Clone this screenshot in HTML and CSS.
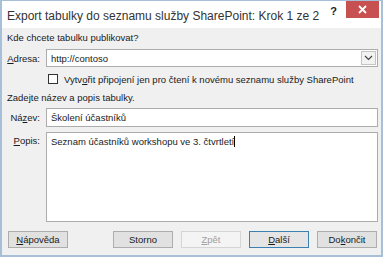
FILE: index.html
```html
<!DOCTYPE html>
<html lang="cs">
  <head>
    <meta charset="UTF-8" />
    <title>Export tabulky do seznamu služby SharePoint</title>
    <link rel="stylesheet" href="styles.css">
  </head>
  <body>
    <div class="dialog">
      <div class="titlebar">
        <h1>Export tabulky do seznamu služby SharePoint: Krok 1 ze 2</h1>
        <div class="help">?</div>
        <div class="close">
          <svg width="9" height="9" viewBox="0 0 9 9"><path d="M1 1L8 8M8 1L1 8" stroke="#fff" stroke-width="1.8"/></svg>
        </div>
      </div>

      <div class="content">
        <p class="section">Kde chcete tabulku publikovat?</p>
        <div class="row">
          <label><u>A</u>dresa:</label>
          <div class="combo">
            <span>http://contoso</span>
            <div class="combo-btn">
              <svg width="9" height="6" viewBox="0 0 9 6"><path d="M1 1L4.5 4.5L8 1" fill="none" stroke="#444" stroke-width="1.2"/></svg>
            </div>
          </div>
        </div>
        <div class="check-row">
          <span class="checkbox"></span>
          <span>Vytv<u>o</u>řit připojení jen pro čtení k novému seznamu služby SharePoint</span>
        </div>

        <p class="section second">Zadejte název a popis tabulky.</p>
        <div class="row">
          <label>Ná<u>z</u>ev:</label>
          <div class="field">Školení účastníků</div>
        </div>
        <div class="row row-top">
          <label><u>P</u>opis:</label>
          <div class="field area">Seznam účastníků workshopu ve 3. čtvrtletí<span class="caret"></span></div>
        </div>

        <div class="buttons">
          <button><u>N</u>ápověda</button>
          <div class="spacer"></div>
          <button>Storno</button>
          <button class="disabled"><u>Z</u>pět</button>
          <button class="default"><u>D</u>alší</button>
          <button>Do<u>k</u>ončit</button>
        </div>
      </div>
    </div>
  </body>
</html>
```

FILE: styles.css
```css
* {
  margin: 0;
  padding: 0;
  box-sizing: border-box;
}

body {
  font-family: 'Liberation Sans', Arial, sans-serif;
  font-size: 9.5px;
  color: #1a1a1a;
  background: #fff;
}

.dialog {
  width: 383px;
  height: 257px;
  border: 2px solid #a7c0da;
  border-top: 1px solid #a7c0da;
  background: #f0f0f0;
  display: flex;
  flex-direction: column;
  overflow: hidden;
}

.titlebar {
  height: 27px;
  background: #fff;
  display: flex;
  align-items: flex-start;
  flex-shrink: 0;
}
.titlebar h1 {
  font-weight: normal;
  font-size: 12px;
  color: #333;
  padding: 8px 0 0 5px;
  flex: 1;
  white-space: nowrap;
}
.help {
  font-weight: bold;
  font-size: 11px;
  padding: 4px 9px 0 0;
}
.close {
  width: 33px;
  height: 18px;
  margin: -1px 2px 0 0;
  background: #c75050;
  display: flex;
  align-items: center;
  justify-content: center;
  flex-shrink: 0;
}

.content {
  padding: 3px 3px 0 5px;
  flex: 1;
  display: flex;
  flex-direction: column;
}
.section {
  line-height: 14px;
  margin-bottom: 4px;
}
.section.second {
  margin: 6px 0 3px;
}
.row {
  display: grid;
  grid-template-columns: 33px 1fr;
  gap: 6px;
  align-items: center;
}
.row + .row {
  margin-top: 5px;
}
.row label {
  text-align: right;
}
.row-top {
  align-items: start;
}
.row-top label {
  padding-top: 3px;
}
.combo,
.field {
  height: 18px;
  background: #fff;
  border: 1px solid #acacac;
  display: flex;
  align-items: center;
  padding-left: 4px;
}
.field {
  height: 19px;
}
.combo span {
  flex: 1;
}
.combo-btn {
  width: 15px;
  height: 14px;
  margin-right: 1px;
  border: 1px solid #c4c4c4;
  background: #f2f2f2;
  display: flex;
  align-items: center;
  justify-content: center;
}
.field.area {
  height: 90px;
  align-items: flex-start;
  padding-top: 3px;
}
.caret {
  display: inline-block;
  width: 1px;
  height: 11px;
  background: #000;
  vertical-align: -2px;
}
.check-row {
  display: flex;
  align-items: center;
  gap: 6px;
  padding-left: 41px;
  margin-top: 6px;
  height: 12px;
  white-space: nowrap;
}
.checkbox {
  width: 10px;
  height: 10px;
  background: #fff;
  border: 1px solid #333;
  flex-shrink: 0;
}

.buttons {
  display: flex;
  gap: 8px;
  padding: 9px 1px 0 1px;
}
.spacer {
  flex: 1;
}
button {
  width: 60px;
  height: 17px;
  font-family: inherit;
  font-size: 9.5px;
  color: #1a1a1a;
  background: #e1e1e1;
  border: 1px solid #adadad;
  white-space: nowrap;
}
button.disabled {
  color: #a0a0a0;
  background: #f4f4f4;
  border-color: #d5d5d5;
}
button.default {
  border-color: #3c7fb1;
  background: #e5e5e5;
}
```
